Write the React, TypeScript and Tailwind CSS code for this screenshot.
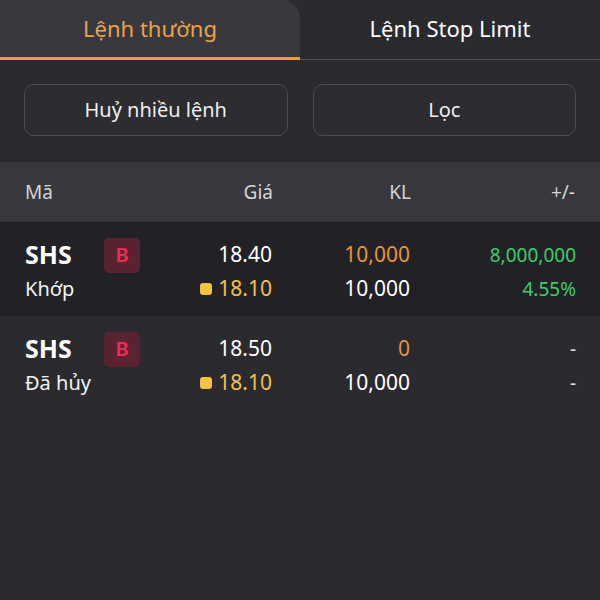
import { ReactNode } from 'react';

interface OrderRow {
    code: string;
    status: string;
    price: string;
    matchPrice: string;
    qty: string;
    matchQty: string;
    change: string;
    changePct: string;
    highlight: boolean;
}

const ROWS: OrderRow[] = [
    {
        code: 'SHS',
        status: 'Khớp',
        price: '18.40',
        matchPrice: '18.10',
        qty: '10,000',
        matchQty: '10,000',
        change: '8,000,000',
        changePct: '4.55%',
        highlight: true,
    },
    {
        code: 'SHS',
        status: 'Đã hủy',
        price: '18.50',
        matchPrice: '18.10',
        qty: '0',
        matchQty: '10,000',
        change: '-',
        changePct: '-',
        highlight: false,
    },
];

function Cols({ a, b, c, d }: { a: ReactNode; b: ReactNode; c: ReactNode; d: ReactNode }) {
    return (
        <div className="flex items-center h-[34px]">
            <div className="w-[140px] flex items-center">{a}</div>
            <div className="w-[108px] flex justify-end items-center">{b}</div>
            <div className="w-[138px] flex justify-end items-center">{c}</div>
            <div className="flex-1 flex justify-end items-center">{d}</div>
        </div>
    );
}

export default function App() {
    return (
        <div
            className="w-[600px] h-[600px] bg-[#2a2a2f] text-white overflow-hidden"
            style={{ fontFamily: '"Noto Sans", "Open Sans", sans-serif' }}
        >
            <div className="flex h-[60px]">
                <div className="flex-1 bg-[#38383e] rounded-tr-[18px] border-b-[3px] border-[#e9a040] flex items-center justify-center text-[22px] text-[#eba24a]">
                    Lệnh thường
                </div>
                <div className="flex-1 border-b border-[#56565c] flex items-center justify-center text-[22px] text-white pb-[2px]">
                    Lệnh Stop Limit
                </div>
            </div>

            <div className="flex gap-[25px] px-[24px] pt-[24px]">
                <button className="flex-1 h-[52px] rounded-[10px] border border-[#4d4d53] bg-[#2c2c31] text-[20px] text-[#f0f0f0]">
                    Huỷ nhiều lệnh
                </button>
                <button className="flex-1 h-[52px] rounded-[10px] border border-[#4d4d53] bg-[#2c2c31] text-[20px] text-[#f0f0f0]">
                    Lọc
                </button>
            </div>

            <div className="mt-[26px] h-[60px] bg-[#37373c] px-[25px] flex flex-col justify-center text-[19px] text-[#d6d6d8]">
                <Cols a="Mã" b="Giá" c="KL" d="+/-" />
            </div>

            {ROWS.map((r, i) => (
                <div
                    key={i}
                    className={`px-[24px] pt-[16px] pb-[10px] ${r.highlight ? 'bg-[#222226]' : ''}`}
                >
                    <Cols
                        a={
                            <>
                                <span className="w-[80px] pl-[1px] text-[25px] font-bold">{r.code}</span>
                                <span className="w-[36px] h-[35px] rounded-[5px] bg-[#5a2332] text-[#f22e55] text-[20px] font-semibold flex items-center justify-center">
                                    B
                                </span>
                            </>
                        }
                        b={<span className="text-[21px]">{r.price}</span>}
                        c={<span className="text-[21px] text-[#e8953b]">{r.qty}</span>}
                        d={
                            <span className={`text-[19px] ${r.change === '-' ? 'text-[#e0e0e0]' : 'text-[#3fcd6b]'}`}>
                                {r.change}
                            </span>
                        }
                    />
                    <Cols
                        a={<span className="pl-[1px] text-[20px] text-[#f2f2f2]">{r.status}</span>}
                        b={
                            <span className="flex items-center gap-[6px] text-[21px] text-[#f2c24c]">
                                <span className="w-[12px] h-[12px] rounded-[3px] bg-[#f5c242]" />
                                {r.matchPrice}
                            </span>
                        }
                        c={<span className="text-[21px]">{r.matchQty}</span>}
                        d={
                            <span className={`text-[19px] ${r.changePct === '-' ? 'text-[#e0e0e0]' : 'text-[#3fcd6b]'}`}>
                                {r.changePct}
                            </span>
                        }
                    />
                </div>
            ))}
        </div>
    );
}
